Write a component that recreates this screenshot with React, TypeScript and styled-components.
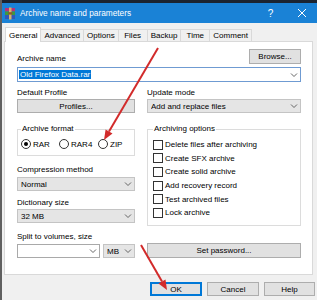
import styled, { createGlobalStyle } from "styled-components";

const GlobalStyle = createGlobalStyle`
  html, body {
    margin: 0;
    padding: 0;
    background: #f0f0f0;
  }
  body {
    font-family: "Liberation Sans", Arial, sans-serif;
    font-size: 8px;
    color: #000;
  }
  * {
    box-sizing: border-box;
  }
`;

const Window = styled.div`
  position: relative;
  width: 317px;
  height: 300px;
  background: #f0f0f0;
  border-left: 2px solid #606060;
  overflow: hidden;
`;

const TitleBar = styled.div`
  display: flex;
  align-items: center;
  height: 23px;
  border-top: 3px solid #1b2431;
  background: #1a82d6;
  color: #fff;
  padding-left: 2px;
  font-size: 8.3px;
`;

const TitleText = styled.span`
  margin-left: 4px;
`;

const TitleButton = styled.div`
  display: flex;
  align-items: center;
  justify-content: center;
  width: 31px;
  height: 100%;
  font-size: 10px;
  &:first-of-type {
    margin-left: auto;
  }
`;

const TabRow = styled.div`
  position: relative;
  z-index: 1;
  display: flex;
  align-items: flex-end;
  height: 15px;
  margin-top: 4px;
  padding-left: 3px;
`;

const Tab = styled.div<{ $active?: boolean }>`
  min-width: 30px;
  height: ${p => (p.$active ? "15px" : "13px")};
  padding: ${p => (p.$active ? "3px 3px 0" : "1px 3px 0")};
  line-height: 10px;
  text-align: center;
  background: ${p => (p.$active ? "#fff" : "#f0f0f0")};
  border: 1px solid #d9d9d9;
  border-bottom: ${p => (p.$active ? "none" : "1px solid #d9d9d9")};
  margin-left: ${p => (p.$active ? "0" : "-1px")};
  &:first-child {
    margin-left: 0;
  }
`;

const Panel = styled.div`
  display: flex;
  flex-direction: column;
  width: 309px;
  height: 234px;
  margin: -1px 0 0 2px;
  padding: 7px 11px 0 12px;
  background: #fff;
  border: 1px solid #d9d9d9;
`;

const NameRow = styled.div`
  display: flex;
  align-items: flex-end;
  justify-content: space-between;
`;

const Label = styled.div<{ $gap?: number }>`
  line-height: 10px;
  margin-top: ${p => p.$gap ?? 0}px;
  white-space: nowrap;
`;

const Button = styled.div<{ $w?: number; $h?: number; $default?: boolean }>`
  display: flex;
  align-items: center;
  justify-content: center;
  width: ${p => (p.$w ? `${p.$w}px` : "auto")};
  height: ${p => p.$h ?? 14}px;
  background: #e1e1e1;
  border: 1px solid ${p => (p.$default ? "#0078d7" : "#adadad")};
  box-shadow: ${p => (p.$default ? "inset 0 0 0 1px #0078d7" : "none")};
  white-space: nowrap;
`;

const Combo = styled.div<{ $focus?: boolean; $grey?: boolean; $w?: number; $h?: number; $gap?: number }>`
  display: flex;
  align-items: center;
  width: ${p => (p.$w ? `${p.$w}px` : "auto")};
  height: ${p => p.$h ?? 14}px;
  margin-top: ${p => p.$gap ?? 0}px;
  padding-left: ${p => (p.$grey ? "3px" : "1px")};
  background: ${p => (p.$grey ? "#e5e5e5" : "#fff")};
  border: 1px solid ${p => (p.$focus ? "#6f9bd2" : p.$grey ? "#c4c4c4" : "#a9a9a9")};
  white-space: nowrap;
`;

const ComboText = styled.span`
  flex: 1;
  overflow: hidden;
`;

const Selected = styled.span`
  background: #0078d7;
  color: #fff;
  padding: 0 1px;
`;

const Columns = styled.div`
  display: flex;
  gap: 12px;
  margin-top: 6px;
`;

const Column = styled.div<{ $w: number }>`
  display: flex;
  flex-direction: column;
  width: ${p => p.$w}px;
`;

const Group = styled.fieldset<{ $pad: number; $h: number }>`
  margin: 11px 0 0;
  height: ${p => p.$h}px;
  padding: 0 4px 0 ${p => p.$pad}px;
  border: 1px solid #dcdcdc;
  min-width: 0;
`;

const Legend = styled.legend`
  padding: 0 1px;
  line-height: 10px;
`;

const RadioRow = styled.div`
  display: flex;
  margin-top: 5px;
  height: 10px;
  align-items: center;
`;

const RadioItem = styled.div<{ $w: number }>`
  display: flex;
  align-items: center;
  width: ${p => p.$w}px;
  gap: 2px;
`;

const RadioDot = styled.span<{ $on?: boolean }>`
  display: flex;
  align-items: center;
  justify-content: center;
  width: 10px;
  height: 10px;
  border: 1px solid #333;
  border-radius: 50%;
  background: #fff;
  &::after {
    content: "";
    width: 4px;
    height: 4px;
    border-radius: 50%;
    background: ${p => (p.$on ? "#000" : "transparent")};
  }
`;

const CheckList = styled.div`
  display: flex;
  flex-direction: column;
  margin-top: 4px;
`;

const CheckRow = styled.div`
  display: flex;
  align-items: center;
  gap: 2px;
  height: 13.6px;
`;

const CheckBox = styled.span`
  width: 10px;
  height: 10px;
  border: 1px solid #333;
  background: #fff;
`;

const SplitRow = styled.div`
  display: flex;
  gap: 3px;
  margin-top: 2px;
`;

const PasswordButton = styled(Button)`
  margin-top: auto;
`;

const Footer = styled.div`
  display: flex;
  justify-content: flex-end;
  gap: 5px;
  margin-top: 7px;
  padding-right: 2px;
`;

const Overlay = styled.svg`
  position: absolute;
  top: 0;
  left: -2px;
  pointer-events: none;
`;

const Chevron = () => (
  <svg width="11" height="6" viewBox="0 0 11 6">
    <polyline points="2,1.5 5,4.5 8,1.5" fill="none" stroke="#555" strokeWidth="0.9" />
  </svg>
);

const RarIcon = () => (
  <svg width="12" height="13" viewBox="0 0 12 13">
    <rect x="1" y="1" width="10" height="3.5" fill="#b8327a" />
    <rect x="1" y="4.5" width="10" height="3.5" fill="#3d9a3f" />
    <rect x="1" y="8" width="10" height="4" fill="#3258b5" />
    <rect x="5" y="0.5" width="2.5" height="12" fill="#d8b36a" />
    <rect x="4.3" y="5.2" width="4" height="2.4" fill="#8a5a2a" />
  </svg>
);

const checks = [
  "Delete files after archiving",
  "Create SFX archive",
  "Create solid archive",
  "Add recovery record",
  "Test archived files",
  "Lock archive",
];

const tabs = ["General", "Advanced", "Options", "Files", "Backup", "Time", "Comment"];

export default function App() {
  return (
    <Window>
      <GlobalStyle />
      <TitleBar>
        <RarIcon />
        <TitleText>Archive name and parameters</TitleText>
        <TitleButton>?</TitleButton>
        <TitleButton>
          <svg width="10" height="10" viewBox="0 0 10 10">
            <path d="M1 1L9 9M9 1L1 9" stroke="#fff" strokeWidth="1" />
          </svg>
        </TitleButton>
      </TitleBar>

      <TabRow>
        {tabs.map((t, i) => (
          <Tab key={t} $active={i === 0}>{t}</Tab>
        ))}
      </TabRow>

      <Panel>
        <NameRow>
          <Label>Archive name</Label>
          <Button $w={52} $h={15}>Browse...</Button>
        </NameRow>
        <Combo $focus $h={15} $gap={3}>
          <ComboText><Selected>Old Firefox Data.rar</Selected></ComboText>
          <Chevron />
        </Combo>

        <Columns>
          <Column $w={118}>
            <Label>Default Profile</Label>
            <Button $h={14} style={{ marginTop: 1 }}>Profiles...</Button>

            <Group $pad={3} $h={32}>
              <Legend>Archive format</Legend>
              <RadioRow>
                <RadioItem $w={38}><RadioDot $on />RAR</RadioItem>
                <RadioItem $w={39}><RadioDot />RAR4</RadioItem>
                <RadioItem $w={30}><RadioDot />ZIP</RadioItem>
              </RadioRow>
            </Group>

            <Label $gap={9}>Compression method</Label>
            <Combo $grey $gap={2}>
              <ComboText>Normal</ComboText>
              <Chevron />
            </Combo>

            <Label $gap={7}>Dictionary size</Label>
            <Combo $grey $gap={1}>
              <ComboText>32 MB</ComboText>
              <Chevron />
            </Combo>

            <Label $gap={9}>Split to volumes, size</Label>
            <SplitRow>
              <Combo $w={83}>
                <ComboText />
                <Chevron />
              </Combo>
              <Combo $grey $w={32}>
                <ComboText>MB</ComboText>
                <Chevron />
              </Combo>
            </SplitRow>
          </Column>

          <Column $w={154}>
            <Label>Update mode</Label>
            <Combo $grey $gap={1}>
              <ComboText>Add and replace files</ComboText>
              <Chevron />
            </Combo>

            <Group $pad={5} $h={102}>
              <Legend>Archiving options</Legend>
              <CheckList>
                {checks.map(c => (
                  <CheckRow key={c}>
                    <CheckBox />
                    {c}
                  </CheckRow>
                ))}
              </CheckList>
            </Group>

            <PasswordButton $h={15}>Set password...</PasswordButton>
          </Column>
        </Columns>
      </Panel>

      <Footer>
        <Button $w={52} $default>OK</Button>
        <Button $w={52}>Cancel</Button>
        <Button $w={51}>Help</Button>
      </Footer>

      <Overlay width="317" height="300" viewBox="0 0 317 300">
        <g stroke="#d22b2b" strokeWidth="2" fill="#d22b2b">
          <line x1="158" y1="48" x2="109" y2="131.4" />
          <polygon points="104,140 112.5,133.4 105.6,129.4" stroke="none" />
          <line x1="141" y1="245" x2="162" y2="281.4" />
          <polygon points="167,290 165.5,279.4 158.5,283.4" stroke="none" />
        </g>
      </Overlay>
    </Window>
  );
}
